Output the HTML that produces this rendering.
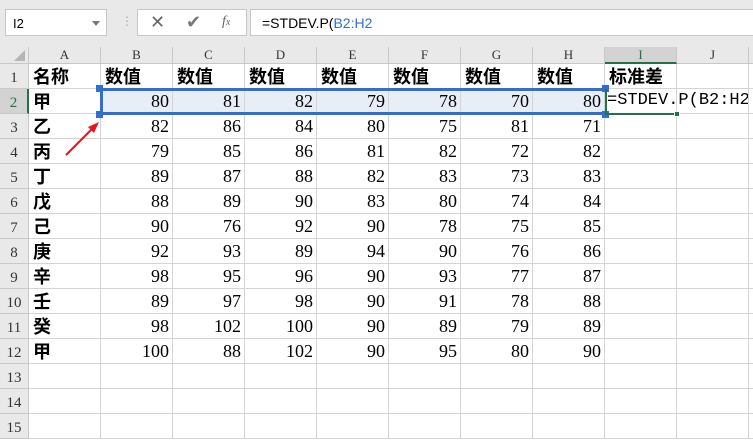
<!DOCTYPE html><html><head><meta charset="utf-8"><style>
*{margin:0;padding:0;box-sizing:border-box}
body{width:753px;height:442px;overflow:hidden;background:#fff;font-family:"Liberation Sans","Noto Sans CJK SC",sans-serif;position:relative}
.top{position:absolute;left:0;top:0;width:753px;height:47px;background:#e9e9e9}
.box{position:absolute;background:#fff;border:1px solid #c6c6c6}
.g{position:absolute;left:0;top:47px;display:grid;grid-template-columns:29px repeat(10,72px) 10px;grid-auto-rows:25px;grid-template-rows:17px}
.g>div{border-right:1px solid #d4d4d4;border-bottom:1px solid #d4d4d4;font-family:"Liberation Serif","Noto Serif CJK SC",serif;font-size:18px;text-align:right;padding-right:3px;line-height:24px;white-space:nowrap;color:#000}
.g>div.h{background:#e9e9e9;font-size:13px;text-align:center;padding:0;line-height:16px;color:#333;border-color:#c8c8c8}
.g>div.r{background:#e9e9e9;text-align:center;padding:0;font-size:15px;color:#333;border-color:#c8c8c8;line-height:28px}
.g>div.c{text-align:left;padding-left:4px;font-family:"Noto Sans CJK SC",sans-serif;font-weight:bold;font-size:18px;line-height:24px}
.g>div.v{background:#e8eef8}
</style></head><body>
<div class="top"></div>
<div class="box" style="left:5px;top:9px;width:102px;height:27px;font-size:13px;padding:6px 0 0 7px">I2<span style="position:absolute;right:6px;top:11px;border-left:4px solid transparent;border-right:4px solid transparent;border-top:5px solid #777"></span></div>
<div style="position:absolute;left:121px;top:14px;color:#aaa;font-size:12px">⋮</div>
<div class="box" style="left:137px;top:9px;width:110px;height:27px;color:#666">
<span style="position:absolute;left:12px;top:2px;font-size:18px">✕</span>
<span style="position:absolute;left:48px;top:2px;font-size:18px;color:#777">✔</span>
<span style="position:absolute;left:84px;top:4px;font-size:14px;font-style:italic;font-family:'Liberation Serif',serif">f<span style="font-size:10px">x</span></span></div>
<div class="box" style="left:250px;top:9px;width:510px;height:27px;font-size:14px;padding:5px 0 0 11px">=STDEV.P(<span style="color:#2f6fd1">B2:H2</span></div>
<div class="g">
<div class="h" style="position:relative"><span style="position:absolute;right:3px;bottom:2px;border-left:11px solid transparent;border-bottom:11px solid #b5b5b5"></span></div><div class="h">A</div><div class="h">B</div><div class="h">C</div><div class="h">D</div><div class="h">E</div><div class="h">F</div><div class="h">G</div><div class="h">H</div><div class="h" style="background:#d3d3d3;color:#217346;border-bottom:2px solid #217346">I</div><div class="h">J</div><div class="h"></div>
<div class="r">1</div><div class="c">名称</div><div class="c">数值</div><div class="c">数值</div><div class="c">数值</div><div class="c">数值</div><div class="c">数值</div><div class="c">数值</div><div class="c">数值</div><div class="c">标准差</div><div></div><div></div>
<div class="r" style="background:#d3d3d3;color:#217346;border-right:2px solid #217346">2</div><div class="c">甲</div><div class="v">80</div><div class="v">81</div><div class="v">82</div><div class="v">79</div><div class="v">78</div><div class="v">70</div><div class="v">80</div><div style="text-align:left;padding-left:2px;font-family:'Liberation Mono',monospace;font-size:17px;overflow:visible">=STDEV.P(B2:H2</div><div></div><div></div>
<div class="r">3</div><div class="c">乙</div><div>82</div><div>86</div><div>84</div><div>80</div><div>75</div><div>81</div><div>71</div><div></div><div></div><div></div>
<div class="r">4</div><div class="c">丙</div><div>79</div><div>85</div><div>86</div><div>81</div><div>82</div><div>72</div><div>82</div><div></div><div></div><div></div>
<div class="r">5</div><div class="c">丁</div><div>89</div><div>87</div><div>88</div><div>82</div><div>83</div><div>73</div><div>83</div><div></div><div></div><div></div>
<div class="r">6</div><div class="c">戊</div><div>88</div><div>89</div><div>90</div><div>83</div><div>80</div><div>74</div><div>84</div><div></div><div></div><div></div>
<div class="r">7</div><div class="c">己</div><div>90</div><div>76</div><div>92</div><div>90</div><div>78</div><div>75</div><div>85</div><div></div><div></div><div></div>
<div class="r">8</div><div class="c">庚</div><div>92</div><div>93</div><div>89</div><div>94</div><div>90</div><div>76</div><div>86</div><div></div><div></div><div></div>
<div class="r">9</div><div class="c">辛</div><div>98</div><div>95</div><div>96</div><div>90</div><div>93</div><div>77</div><div>87</div><div></div><div></div><div></div>
<div class="r">10</div><div class="c">壬</div><div>89</div><div>97</div><div>98</div><div>90</div><div>91</div><div>78</div><div>88</div><div></div><div></div><div></div>
<div class="r">11</div><div class="c">癸</div><div>98</div><div>102</div><div>100</div><div>90</div><div>89</div><div>79</div><div>89</div><div></div><div></div><div></div>
<div class="r">12</div><div class="c">甲</div><div>100</div><div>88</div><div>102</div><div>90</div><div>95</div><div>80</div><div>90</div><div></div><div></div><div></div>
<div class="r">13</div><div></div><div></div><div></div><div></div><div></div><div></div><div></div><div></div><div></div><div></div><div></div>
<div class="r">14</div><div></div><div></div><div></div><div></div><div></div><div></div><div></div><div></div><div></div><div></div><div></div>
<div class="r">15</div><div></div><div></div><div></div><div></div><div></div><div></div><div></div><div></div><div></div><div></div><div></div>
</div>
<div style="position:absolute;left:100px;top:88px;width:506px;height:27px;border:3px solid #2f6fd1;border-right:none"></div>
<div style="position:absolute;left:96px;top:85px;width:7px;height:7px;background:#2f6fd1"></div>
<div style="position:absolute;left:96px;top:111px;width:7px;height:7px;background:#2f6fd1"></div>
<div style="position:absolute;left:602px;top:85px;width:7px;height:7px;background:#2f6fd1"></div>
<div style="position:absolute;left:602px;top:111px;width:7px;height:7px;background:#2f6fd1"></div>
<div style="position:absolute;left:605px;top:89px;width:2px;height:26px;background:#217346"></div>
<div style="position:absolute;left:605px;top:113px;width:72px;height:2px;background:#217346"></div>
<div style="position:absolute;left:674px;top:111px;width:6px;height:6px;background:#217346;border:1px solid #fff"></div>
<svg style="position:absolute;left:0;top:0" width="753" height="442"><line x1="66" y1="155" x2="94" y2="127" stroke="#e8141b" stroke-width="2"/><polygon points="99,122 88,127 94,133" fill="#e8141b"/></svg>
</body></html>
